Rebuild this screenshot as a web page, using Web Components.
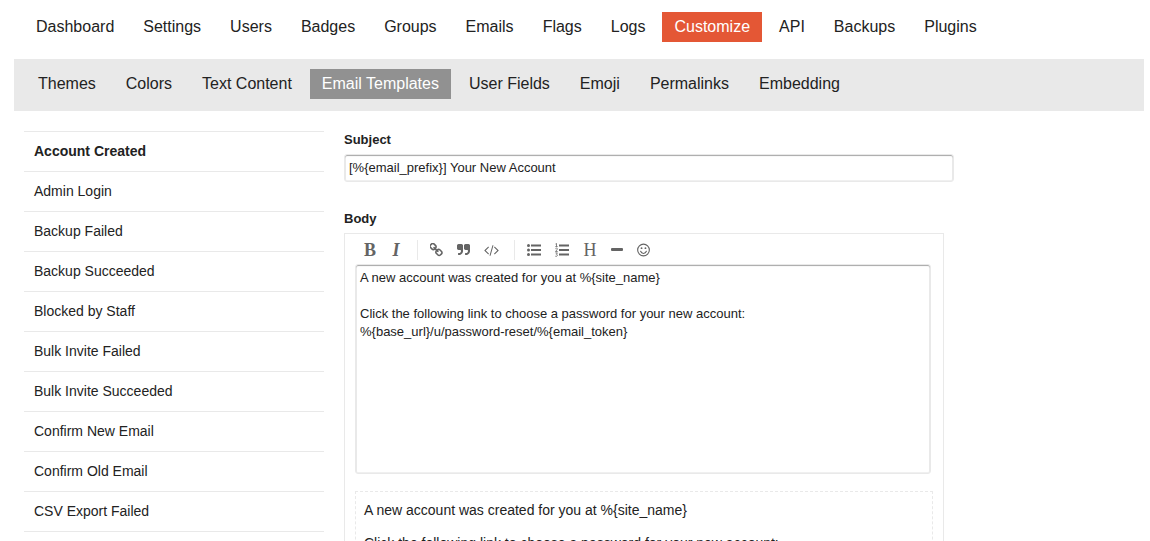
<!DOCTYPE html>
<html lang="en">
<head>
<meta charset="utf-8">
<title>Email Templates</title>
<style>
  body {
    margin: 0;
    height: 100vh;
    overflow: hidden;
    background: #fff;
    color: #222;
    font-family: "Liberation Sans", Arial, sans-serif;
    font-size: 14px;
    line-height: 20px;
  }
</style>
</head>
<body>
<admin-page>
  <nav-pills slot="primary" label="Admin" style="--active: #e45735; --gap: 5px"
    items="Dashboard|Settings|Users|Badges|Groups|Emails|Flags|Logs|Customize|API|Backups|Plugins" current="Customize"></nav-pills>
  <nav-pills slot="secondary" label="Customize" style="--active: #919191; --gap: 6px"
    items="Themes|Colors|Text Content|Email Templates|User Fields|Emoji|Permalinks|Embedding" current="Email Templates"></nav-pills>
  <template-list slot="side" current="Account Created"
    items="Account Created|Admin Login|Backup Failed|Backup Succeeded|Blocked by Staff|Bulk Invite Failed|Bulk Invite Succeeded|Confirm New Email|Confirm Old Email|CSV Export Failed"></template-list>
  <template-form>
    <body-preview slot="preview">
      <p>A new account was created for you at %{site_name}</p>
      <p>Click the following link to choose a password for your new account:</p>
    </body-preview>
  </template-form>
</admin-page>

<script>
const base = '<style>*{box-sizing:border-box}:host{display:block}:host([hidden]){display:none}</style>';

function define(name, html, setup) {
  customElements.define(name, class extends HTMLElement {
    connectedCallback() {
      if (this.shadowRoot) return;
      const root = this.attachShadow({ mode: 'open' });
      root.innerHTML = base + html;
      if (setup) setup(this, root);
    }
  });
}

function fillLinks(host, root) {
  const ul = root.querySelector('ul');
  for (const text of host.getAttribute('items').split('|')) {
    const li = document.createElement('li');
    const a = document.createElement('a');
    a.href = '#' + text.toLowerCase().replace(/ /g, '-');
    a.textContent = text;
    if (text === host.getAttribute('current')) a.setAttribute('aria-current', 'page');
    li.append(a);
    ul.append(li);
  }
}

define('admin-page', `
  <style>
    :host { padding: 12px 6px 0 14px; }
    header { padding: 0 10px; }
    .sub { margin-top: 17px; padding: 10px 12px 12px; background: #e9e9e9; }
    .columns { display: grid; grid-template-columns: 300px minmax(0, 1fr); gap: 20px; padding: 20px 0 0 10px; }
  </style>
  <header><slot name="primary"></slot></header>
  <div class="sub"><slot name="secondary"></slot></div>
  <div class="columns">
    <aside><slot name="side"></slot></aside>
    <main><slot></slot></main>
  </div>`);

define('nav-pills', `
  <style>
    ul { display: flex; flex-wrap: wrap; gap: var(--gap); margin: 0; padding: 0; list-style: none; }
    a { display: block; padding: 5px 12px; color: inherit; font-size: 16px; text-decoration: none; white-space: nowrap; }
    a[aria-current] { background: var(--active); color: #fff; }
  </style>
  <nav><ul></ul></nav>`, (host, root) => {
  root.querySelector('nav').setAttribute('aria-label', host.getAttribute('label'));
  fillLinks(host, root);
});

define('template-list', `
  <style>
    ul { margin: 0; padding: 0; list-style: none; border-bottom: 1px solid #e9e9e9; }
    li { border-top: 1px solid #e9e9e9; }
    a { display: block; padding: 9px 10px 10px; color: inherit; text-decoration: none; }
    a[aria-current] { font-weight: bold; }
  </style>
  <ul></ul>`, fillLinks);

const icons = {
  link: ['120 120 1552 1552', 13, '<path d="M1456 1216q0-40-28-68l-208-208q-28-28-68-28-42 0-72 32 3 3 19 18.500t21.500 21.500 15 19 13 25.500 3.500 27.500q0 40-28 68t-68 28q-15 0-27.500-3.500t-25.500-13-19-15-21.500-21.500-18.500-19q-33 31-33 73 0 40 28 68l206 207q27 27 68 27 40 0 68-26l147-146q28-28 28-67zm-703-705q0-40-28-68l-206-207q-28-28-68-28-39 0-68 27l-147 146q-28 28-28 67 0 40 28 68l208 208q27 27 68 27 42 0 72-31-3-3-19-18.500t-21.500-21.500-15-19-13-25.500-3.500-27.500q0-40 28-68t68-28q15 0 27.500 3.500t25.500 13 19 15 21.500 21.500 18.500 19q33-31 33-73zm895 705q0 120-85 203l-147 146q-83 83-203 83-121 0-204-85l-206-207q-83-83-83-203 0-123 88-209l-88-88q-86 88-208 88-120 0-204-84l-208-208q-84-84-84-204t85-203l147-146q83-83 203-83 121 0 204 85l206 207q83 83 83 203 0 123-88 209l88 88q86-88 208-88 120 0 204 84l208 208q84 84 84 204z"/>'],
  quote: ['64 0 1664 1792', 13, '<path id="q" d="M832 320v704q0 104-40 198t-110 164-163 110-199 40h-64q-26 0-45-19t-19-45v-128q0-26 19-45t45-19h64q106 0 181-75t75-181v-32q0-40-28-68t-68-28h-224q-80 0-136-56t-56-136v-384q0-80 56-136t136-56h384q80 0 136 56t56 136z"/><use href="#q" x="896"/>'],
  code: ['0 0 1920 1792', 15, '<path d="M617 1399l-50 50q-10 10-23 10t-23-10l-466-466q-10-10-10-23t10-23l466-466q10-10 23-10t23 10l50 50q10 10 10 23t-10 23l-393 393 393 393q10 10 10 23t-10 23zm591-1067l-373 1291q-4 13-16 20t-23 2l-62-17q-13-4-20-16t-2-24l373-1291q4-13 16-20t23-2l62 17q13 4 20 16t2 24zm657 651l-466 466q-10 10-23 10t-23-10l-50-50q-10-10-10-23t10-23l393-393-393-393q-10-10-10-23t10-23l50-50q10-10 23-10t23 10l466 466q10 10 10 23t-10 23z"/>'],
  bullets: ['0 0 14 14', 14, '<circle cx="1.500" cy="2.500" r="1.500"/><circle cx="1.500" cy="7" r="1.500"/><circle cx="1.500" cy="11.500" r="1.500"/><path d="M4 1.500h10v2H4zM4 6h10v2H4zM4 10.500h10v2H4z"/>'],
  numbers: ['0 0 14 14', 14, '<path d="M4 1.500h10v2H4zM4 6h10v2H4zM4 10.500h10v2H4z"/><path fill="none" stroke="currentColor" stroke-width=".8" d="M.5 1L1.500.4V3.600M.3 3.600H2.700M.4 5.700Q1.500 4.700 2.300 5.500 2.600 6.500.5 8.500H2.700M.4 9.900H2.400L1.400 11.300Q2.700 11.500 2.300 12.700 1.500 13.800.3 13.200"/>'],
  rule: ['0 0 12 14', 12, '<rect x="0" y="5" width="12" height="3" rx="1"/>'],
  smile: ['0 0 14 14', 13, '<g fill="none" stroke="currentColor" stroke-width="1.200"><circle cx="7" cy="7" r="6.300"/><path stroke-linecap="round" d="M3.900 8.400Q4.800 10.700 7 10.700T10.100 8.400"/></g><circle cx="4.900" cy="5" r="1"/><circle cx="9.100" cy="5" r="1"/>']
};

define('tool-button', `
  <style>
    button { display: flex; align-items: center; justify-content: center; height: 24px; padding: 0 7px; border: 0; background: none; color: #646464; font: 18px/24px "Liberation Serif", "Times New Roman", serif; }
    span { display: flex; justify-content: center; width: 12px; }
    .b { font-weight: bold; }
    .i { font-weight: bold; font-style: italic; }
    .h { width: 14px; }
    svg { display: block; height: 14px; fill: currentColor; }
  </style>
  <button type="button"></button>`, (host, root) => {
  const button = root.querySelector('button');
  const icon = icons[host.getAttribute('icon')];
  button.title = host.getAttribute('label');
  button.setAttribute('aria-label', button.title);
  if (icon) button.innerHTML = `<svg viewBox="${icon[0]}" style="width:${icon[1]}px" aria-hidden="true">${icon[2]}</svg>`;
  else {
    const letter = host.getAttribute('letter');
    button.innerHTML = `<span class="${letter.toLowerCase()}">${letter}</span>`;
  }
});

define('editor-toolbar', `
  <style>
    :host { display: flex; align-items: center; height: 30px; padding: 2px 2px 0; }
    i { width: 1px; height: 20px; margin: 0 5px 0 8px; background: #e9e9e9; }
  </style>
  <tool-button letter="B" label="Strong"></tool-button>
  <tool-button letter="I" label="Emphasis"></tool-button>
  <i></i>
  <tool-button icon="link" label="Hyperlink"></tool-button>
  <tool-button icon="quote" label="Blockquote"></tool-button>
  <tool-button icon="code" label="Preformatted text"></tool-button>
  <i></i>
  <tool-button icon="bullets" label="Bulleted List"></tool-button>
  <tool-button icon="numbers" label="Numbered List"></tool-button>
  <tool-button letter="H" label="Heading"></tool-button>
  <tool-button icon="rule" label="Horizontal Rule"></tool-button>
  <tool-button icon="smile" label="Emoji"></tool-button>`);

define('body-preview', `
  <style>
    :host { padding: 8px; border: 1px dashed #e9e9e9; }
    ::slotted(p) { margin: 0 0 13px; }
  </style>
  <slot></slot>`);

define('template-form', `
  <style>
    label { display: block; font-size: 13px; line-height: 18px; font-weight: bold; }
    input, textarea {
      display: block; width: 100%; border: 1px solid #e9e9e9; border-radius: 3px; background: #fff; color: #222;
      font: 13px/18px "Liberation Sans", Arial, sans-serif; outline: 0;
      box-shadow: inset 0 1px 1px rgba(0, 0, 0, .3), inset 0 0 0 1px #f0f0f0;
    }
    input { height: 28px; max-width: 610px; margin: 5px 0 28px; padding: 3px 4px 5px; }
    textarea { height: 210px; padding: 4px; resize: none; }
    .editor { max-width: 600px; margin-top: 5px; padding: 0 10px 10px; border: 1px solid #e9e9e9; }
    .field { padding-right: 2px; margin-bottom: 17px; }
  </style>
  <form>
    <label for="subject">Subject</label>
    <input id="subject" type="text" value="[%{email_prefix}] Your New Account">
    <label for="body">Body</label>
    <div class="editor">
      <editor-toolbar></editor-toolbar>
      <div class="field"><textarea id="body">A new account was created for you at %{site_name}

Click the following link to choose a password for your new account:
%{base_url}/u/password-reset/%{email_token}</textarea></div>
      <slot name="preview"></slot>
    </div>
  </form>`);
</script>
</body>
</html>
